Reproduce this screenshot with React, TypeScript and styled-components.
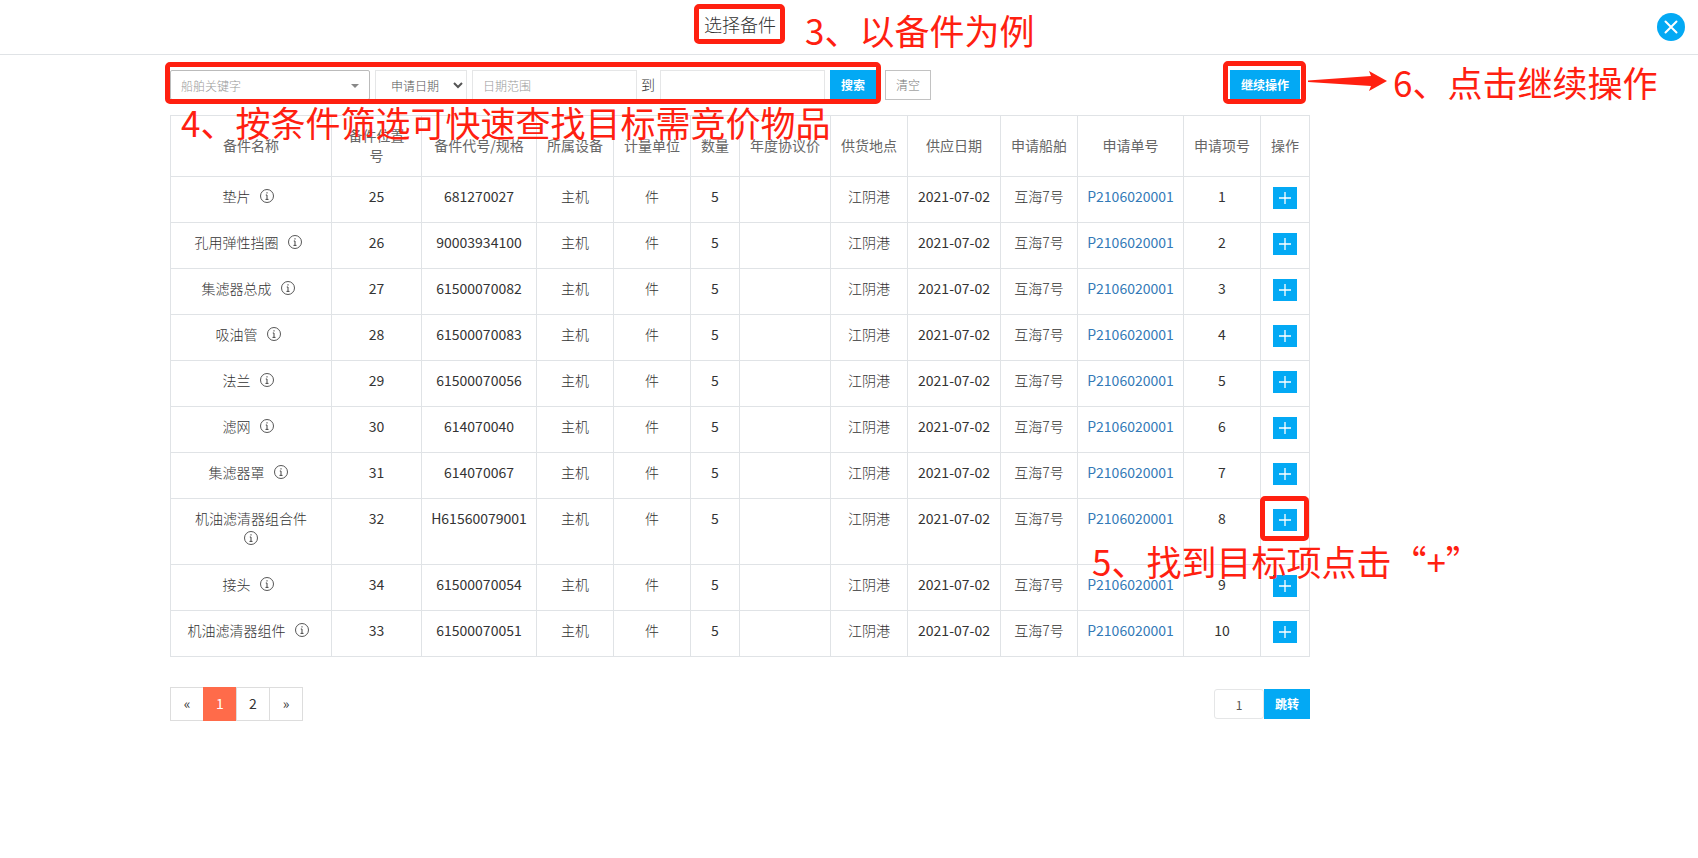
import React from "react";
import styled, { createGlobalStyle, css } from "styled-components";

const BLUE = "#03a9f4";
const RED = "#ff2010";
const LINE = "#e0e3e6";

const GlobalStyle = createGlobalStyle`
  *, *::before, *::after { box-sizing: border-box; }
  body {
    margin: 0;
    background: #fff;
    color: #333;
    font-family: "Noto Sans CJK SC", "Noto Sans", sans-serif;
    font-size: 14px;
    font-weight: 300;
    line-height: 20px;
  }
  button, input, select { font-family: inherit; font-weight: inherit; }
`;

const Page = styled.div`
  position: relative;
  min-height: 100vh;
  overflow-x: hidden;
`;

const Header = styled.header`
  position: relative;
  display: flex;
  justify-content: center;
  align-items: flex-start;
  height: 55px;
  padding: 4px 218px 0 0;
  border-bottom: 1px solid ${LINE};
`;

const Title = styled.h1`
  margin: 0;
  padding: 10px;
  font-size: 18px;
  font-weight: 300;
  line-height: 20px;
`;

const CloseButton = styled.button`
  position: absolute;
  top: 13px;
  right: 13px;
  width: 28px;
  height: 28px;
  padding: 0;
  border: 0;
  border-radius: 50%;
  background: ${BLUE};
  svg { display: block; }
`;

const Main = styled.main`
  display: flex;
  justify-content: center;
  padding: 15px 218px 0 0;
`;

const Container = styled.div`
  position: relative;
  width: 100%;
  max-width: 1140px;
`;

const Marked = styled.div`
  position: relative;
`;

const Ring = styled.span<{ $inset: string }>`
  position: absolute;
  inset: ${(p) => p.$inset};
  border: 5px solid ${RED};
  border-radius: 5px;
  pointer-events: none;
`;

const Note = styled.p<{ $left: number; $top: number }>`
  position: absolute;
  left: ${(p) => p.$left}px;
  top: ${(p) => p.$top}px;
  margin: 0;
  color: ${RED};
  font-size: 35px;
  font-weight: 400;
  line-height: 40px;
  white-space: nowrap;
  pointer-events: none;
`;

const Arrow = styled.svg`
  position: absolute;
  left: 1138px;
  top: 0;
  pointer-events: none;
`;

const Toolbar = styled.form`
  display: flex;
  justify-content: space-between;
  margin-bottom: 15px;
  padding-right: 10px;
`;

const Filters = styled.div`
  display: flex;
  gap: 9px;
`;

const FilterSet = styled(Marked)`
  display: flex;
  gap: 5px;
`;

const field = css`
  height: 30px;
  border: 1px solid #e5e6e7;
  background: #fff;
  font-size: 12px;
`;

const KeywordField = styled.div`
  position: relative;
  display: flex;
  svg {
    position: absolute;
    right: 11px;
    top: 14px;
    pointer-events: none;
  }
`;

const KeywordSelect = styled.select`
  ${field}
  width: 200px;
  padding: 0 10px;
  border-color: #bbb;
  border-radius: 2px;
  appearance: none;
  color: #999;
`;

const DateType = styled.select`
  ${field}
  width: 92px;
  padding: 0 0 0 11px;
  color: #555;
`;

const DateInput = styled.input`
  ${field}
  width: 165px;
  padding: 0 10px;
  &::placeholder { color: #999; opacity: 1; }
`;

const DateRange = styled.div`
  display: flex;
  gap: 4px;
`;

const RangeWord = styled.label`
  width: 15px;
  line-height: 28px;
`;

const Action = styled.button<{ $plain?: boolean }>`
  height: 30px;
  padding: 0 10px;
  border: 1px solid ${(p) => (p.$plain ? "#c2c2c2" : BLUE)};
  background: ${(p) => (p.$plain ? "#fff" : BLUE)};
  color: ${(p) => (p.$plain ? "#777" : "#fff")};
  font-size: 12px;
  font-weight: ${(p) => (p.$plain ? 300 : 700)};
  line-height: 20px;
`;

const Table = styled.table`
  width: 100%;
  table-layout: fixed;
  border-collapse: collapse;
  text-align: center;
  th, td { border: 1px solid ${LINE}; }
  th {
    padding: 9px 10px 11px;
    color: #666;
    font-weight: 400;
    vertical-align: middle;
  }
  td {
    padding: 9px 10px 16px;
    vertical-align: top;
  }
`;

const Figure = styled.td`
  font-weight: 400;
  white-space: nowrap;
  && { padding-left: 5px; padding-right: 5px; }
`;

const OrderLink = styled.a`
  color: #337ab7;
  text-decoration: none;
`;

const InfoIcon = styled.svg`
  margin: 0 6px;
  vertical-align: -1px;
`;

const AddSlot = styled(Marked)`
  display: flex;
  justify-content: center;
  height: 20px;
  padding-top: 1px;
`;

const AddButton = styled.button`
  flex: none;
  width: 24px;
  height: 22px;
  padding: 0;
  border: 0;
  background: ${BLUE};
  svg { display: block; margin: 0 auto; }
`;

const Footer = styled.div`
  display: flex;
  justify-content: space-between;
  align-items: center;
  margin-top: 30px;
`;

const Pages = styled.nav`
  display: flex;
`;

const PageLink = styled.a<{ $active?: boolean }>`
  width: 34px;
  height: 34px;
  border: 1px solid ${(p) => (p.$active ? "#ff6b4a" : "#ddd")};
  line-height: 30px;
  text-align: center;
  text-decoration: none;
  font-weight: 400;
  color: ${(p) => (p.$active ? "#fff" : "#333")};
  background: ${(p) => (p.$active ? "#ff6b4a" : "none")};
  & + & { margin-left: -1px; }
`;

const Jump = styled.form`
  display: flex;
`;

const JumpInput = styled.input`
  ${field}
  width: 50px;
  border-radius: 3px;
  text-align: center;
  font-weight: 400;
  color: #555;
`;

const COLUMNS: [string, number][] = [
  ["备件名称", 161],
  ["备件位置号", 90],
  ["备件代号/规格", 115],
  ["所属设备", 77],
  ["计量单位", 77],
  ["数量", 49],
  ["年度协议价", 91],
  ["供货地点", 77],
  ["供应日期", 93],
  ["申请船舶", 77],
  ["申请单号", 106],
  ["申请项号", 77],
  ["操作", 49],
];

const PARTS = [
  ["垫片", "25", "681270027"],
  ["孔用弹性挡圈", "26", "90003934100"],
  ["集滤器总成", "27", "61500070082"],
  ["吸油管", "28", "61500070083"],
  ["法兰", "29", "61500070056"],
  ["滤网", "30", "614070040"],
  ["集滤器罩", "31", "614070067"],
  ["机油滤清器组合件", "32", "H61560079001"],
  ["接头", "34", "61500070054"],
  ["机油滤清器组件", "33", "61500070051"],
];

const Info = () => (
  <InfoIcon width="14" height="14" viewBox="0 0 14 14" fill="none" stroke="#444">
    <circle cx="7" cy="7" r="6.5" strokeWidth="0.9" />
    <path d="M7 3.2v1.3M5.8 6H7v4.3M5.5 10.4h3" strokeWidth="1" />
  </InfoIcon>
);

const Plus = () => (
  <svg width="12" height="12" viewBox="0 0 12 12" stroke="#fff" strokeWidth="1.3">
    <path d="M6 0v12M0 6h12" />
  </svg>
);

export default function App() {
  const stop = (e: React.FormEvent) => e.preventDefault();
  return (
    <Page>
      <GlobalStyle />
      <Header>
        <Marked>
          <Title>选择备件</Title>
          <Ring $inset="0 1px 0 0" />
          <Note $left={111} $top={6}>3、以备件为例</Note>
        </Marked>
        <CloseButton type="button" aria-label="关闭">
          <svg width="28" height="28" viewBox="0 0 28 28" stroke="#fff" strokeWidth="2" strokeLinecap="round">
            <path d="M8.5 8.5l11 11M19.5 8.5l-11 11" />
          </svg>
        </CloseButton>
      </Header>
      <Main>
        <Container>
          <Toolbar onSubmit={stop}>
            <Filters>
              <FilterSet>
                <KeywordField>
                  <KeywordSelect aria-label="船舶关键字">
                    <option>船舶关键字</option>
                  </KeywordSelect>
                  <svg width="8" height="4" viewBox="0 0 8 4">
                    <path d="M0 0h8L4 4z" fill="#888" />
                  </svg>
                </KeywordField>
                <DateType aria-label="日期类型">
                  <option>申请日期</option>
                </DateType>
                <DateRange>
                  <DateInput placeholder="日期范围" aria-label="日期范围" />
                  <RangeWord htmlFor="date-to">到</RangeWord>
                  <DateInput id="date-to" />
                </DateRange>
                <Action type="submit">搜索</Action>
                <Ring $inset="-8px -5px -4px -5px" />
              </FilterSet>
              <Action type="reset" $plain>清空</Action>
            </Filters>
            <Marked>
              <Action type="button">继续操作</Action>
              <Ring $inset="-9px -6px -4px -7px" />
            </Marked>
          </Toolbar>
          <Table>
            <colgroup>
              {COLUMNS.map(([name, width]) => (
                <col key={name} style={{ width }} />
              ))}
            </colgroup>
            <thead>
              <tr>
                {COLUMNS.map(([name]) => (
                  <th key={name} scope="col">{name}</th>
                ))}
              </tr>
            </thead>
            <tbody>
              {PARTS.map(([name, position, code], i) => (
                <tr key={code}>
                  <td>{name} <Info /></td>
                  <Figure>{position}</Figure>
                  <Figure>{code}</Figure>
                  <td>主机</td>
                  <td>件</td>
                  <Figure>5</Figure>
                  <td />
                  <td>江阴港</td>
                  <Figure>2021-07-02</Figure>
                  <td>互海7号</td>
                  <Figure><OrderLink href="#order">P2106020001</OrderLink></Figure>
                  <Figure>{i + 1}</Figure>
                  <td>
                    <AddSlot>
                      <AddButton type="button" aria-label="添加"><Plus /></AddButton>
                      {i === 7 && <Ring $inset="-12px -10px -13px -11px" />}
                    </AddSlot>
                  </td>
                </tr>
              ))}
            </tbody>
          </Table>
          <Footer>
            <Pages aria-label="分页">
              <PageLink href="#prev">«</PageLink>
              <PageLink href="#1" $active>1</PageLink>
              <PageLink href="#2">2</PageLink>
              <PageLink href="#next">»</PageLink>
            </Pages>
            <Jump onSubmit={stop}>
              <JumpInput defaultValue="1" aria-label="页码" />
              <Action type="submit">跳转</Action>
            </Jump>
          </Footer>
          <Note $left={11} $top={32}>4、按条件筛选可快速查找目标需竞价物品</Note>
          <Note $left={922} $top={471}>5、找到目标项点击“+”</Note>
          <Note $left={1223} $top={-8}>6、点击继续操作</Note>
          <Arrow width="80" height="22" viewBox="0 0 80 22">
            <path d="M0 10.5L63 6l-2-5 18 10-18 10 2-5L0 12z" fill={RED} />
          </Arrow>
        </Container>
      </Main>
    </Page>
  );
}
